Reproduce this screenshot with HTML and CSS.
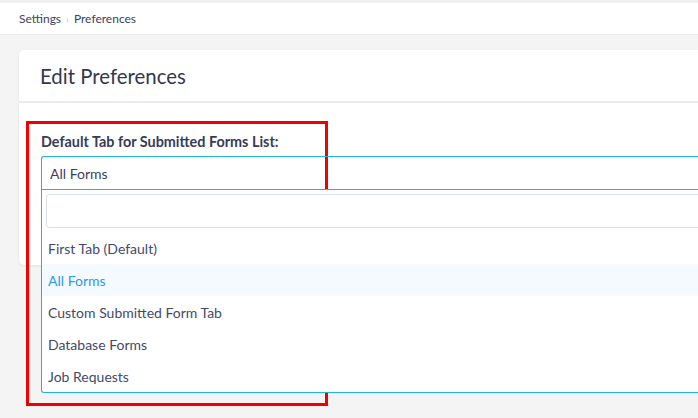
FILE: index.html
```html
<!DOCTYPE html>
<html>
<head>
<meta charset="utf-8">
<link rel="stylesheet" href="styles.css">
</head>
<body>
<div class="topbar">
  <nav class="crumbs"><span>Settings</span><span class="sep">›</span><span>Preferences</span></nav>
</div>
<main class="main">
  <section class="card">
    <header class="card-head"><h1>Edit Preferences</h1></header>
    <div class="card-body">
      <div class="highlight">
        <label class="field-label">Default Tab for Submitted Forms List:</label>
        <div class="select">
          <div class="select-value">All Forms</div>
          <div class="menu">
            <div class="search"></div>
            <ul class="options">
              <li>First Tab (Default)</li>
              <li class="active">All Forms</li>
              <li>Custom Submitted Form Tab</li>
              <li>Database Forms</li>
              <li>Job Requests</li>
            </ul>
          </div>
        </div>
      </div>
    </div>
  </section>
</main>
</body>
</html>
```
FILE: styles.css
```css
* { box-sizing: border-box; }
html, body { margin: 0; padding: 0; }
body {
  background: #f4f4f4;
  font-family: "Lato", "Noto Sans", sans-serif;
  color: #3b4060;
  width: 698px;
  height: 418px;
  overflow: hidden;
}
.topbar {
  height: 35px;
  background: #ffffff;
  border-top: 3px solid #f0f0f0;
  border-bottom: 1px solid #ececec;
  padding-left: 19px;
  display: flex;
  align-items: center;
}
.crumbs {
  font-size: 12px;
  color: #3d4257;
  display: flex;
  align-items: center;
  gap: 5px;
}
.crumbs .sep { color: #b8bcc6; font-size: 10px; }
.main { padding: 15px 0 0 19px; }
.card {
  background: #ffffff;
  height: 215px;
  border-radius: 5px 0 0 5px;
  box-shadow: 0 1px 3px rgba(0,0,0,0.08);
}
.card-head {
  height: 53px;
  border-bottom: 2px solid #e9ecef;
  padding-left: 21px;
  display: flex;
  align-items: center;
}
.card-head h1 {
  margin: 0;
  font-size: 20.4px;
  font-weight: 400;
  color: #33384f;
}
.card-body { padding: 18px 0 0 7px; }
.highlight {
  width: 302px;
  height: 285px;
  border: 3px solid #f20000;
  padding: 10px 0 0 12px;
}
.field-label {
  display: block;
  font-size: 14.4px;
  font-weight: 700;
  line-height: 16px;
  color: #363b58;
  margin-bottom: 6px;
  white-space: nowrap;
}
.select { width: 657px; }
.select-value {
  height: 34px;
  border: 1px solid #22b4d6;
  border-right: none;
  border-radius: 3px 0 0 0;
  padding-left: 8px;
  display: flex;
  align-items: center;
  font-size: 14px;
  color: #3a3f5c;
}
.menu {
  border: 1px solid #22b4d6;
  border-top: none;
  border-right: none;
  border-radius: 0 0 0 3px;
  background: #ffffff;
  padding: 4px 0 0 0;
}
.search {
  height: 34px;
  margin: 0 0 4px 4px;
  border: 1px solid #dde1e8;
  border-right: none;
  border-radius: 4px 0 0 4px;
}
.options { list-style: none; margin: 0; padding: 0; }
.options li {
  height: 32px;
  padding-left: 6px;
  display: flex;
  align-items: center;
  font-size: 14px;
  color: #444a66;
}
.options li.active {
  background: #f5faff;
  color: #2e9be2;
}
```
